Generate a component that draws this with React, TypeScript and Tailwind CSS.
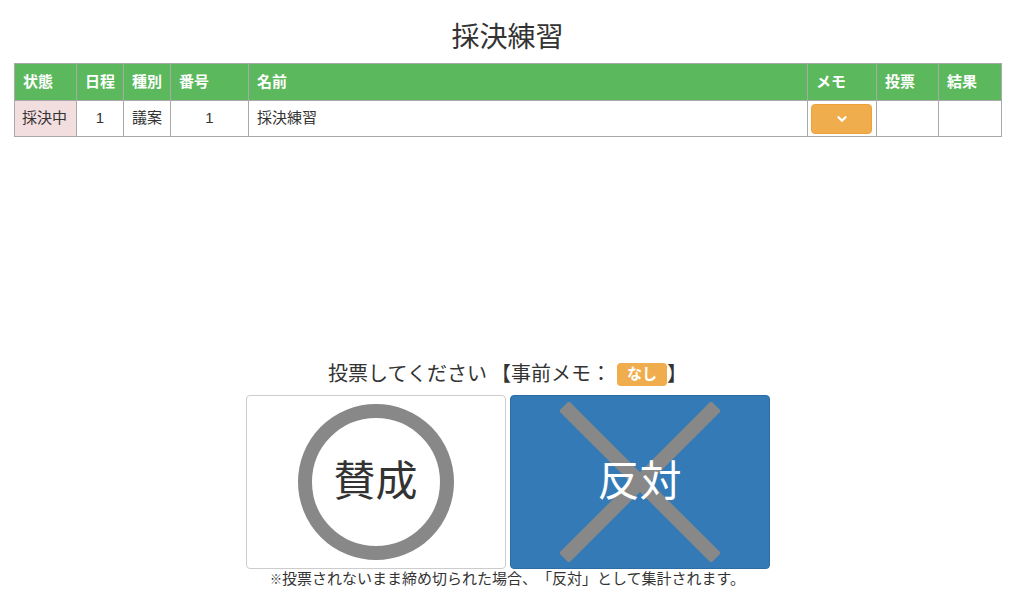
import { ChevronDown } from 'lucide-react'

const font = { fontFamily: '"Liberation Sans", "Noto Sans CJK JP", sans-serif' }

const cols = [
  { label: '状態', w: 'w-[62px]' },
  { label: '日程', w: 'w-[47px]' },
  { label: '種別', w: 'w-[47px]' },
  { label: '番号', w: 'w-[78px]' },
  { label: '名前', w: '' },
  { label: 'メモ', w: 'w-[69px]' },
  { label: '投票', w: 'w-[62px]' },
  { label: '結果', w: 'w-[63px]' },
]

function Circle() {
  return (
    <svg width="160" height="160" viewBox="0 0 160 160" className="absolute">
      <circle cx="80" cy="80" r="71" fill="none" stroke="#888888" strokeWidth="14" />
    </svg>
  )
}

function Cross() {
  return (
    <svg width="160" height="160" viewBox="0 0 160 160" className="absolute">
      <line x1="4" y1="4" x2="156" y2="156" stroke="#888888" strokeWidth="14" />
      <line x1="156" y1="4" x2="4" y2="156" stroke="#888888" strokeWidth="14" />
    </svg>
  )
}

export default function App() {
  return (
    <div className="min-h-[594px] bg-white text-[#333] [text-spacing-trim:space-all]" style={font}>
      {/* Title */}
      <h1 className="pt-[19px] text-center text-[28px] leading-[38px]">採決練習</h1>

      {/* Agenda table */}
      <div className="pl-[14px] pr-[13px] pt-[6px]">
        <table className="w-full table-fixed border-collapse border border-[#aaa] text-[15px]">
          <thead>
            <tr className="h-[37px] bg-[#5cb85c] text-white">
              {cols.map(c => (
                <th key={c.label} className={`${c.w} border border-[#aaa] px-[8px] text-left font-bold`}>
                  {c.label}
                </th>
              ))}
            </tr>
          </thead>
          <tbody>
            <tr className="h-[36px]">
              <td className="border border-[#aaa] bg-[#f2dede] px-[7px]">採決中</td>
              <td className="border border-[#aaa] text-center">1</td>
              <td className="border border-[#aaa] px-[8px]">議案</td>
              <td className="border border-[#aaa] text-center">1</td>
              <td className="border border-[#aaa] px-[8px]">採決練習</td>
              <td className="border border-[#aaa] px-[3px]">
                <button className="flex h-[30px] w-[61px] items-center justify-center rounded-[4px] border border-[#eea236] bg-[#f0ad4e] text-white">
                  <ChevronDown size={14} strokeWidth={4} />
                </button>
              </td>
              <td className="border border-[#aaa]"></td>
              <td className="border border-[#aaa]"></td>
            </tr>
          </tbody>
        </table>
      </div>

      {/* Vote area */}
      <div className="mt-[223px] flex flex-col items-center">
        <div className="flex items-center text-[20px] leading-[28px]">
          <span className="mr-[4px]">投票してください</span>
          <span>【事前メモ：</span>
          <span className="ml-[6px] flex h-[23px] w-[50px] items-center justify-center rounded-[4px] bg-[#f0ad4e] text-[15px] font-bold text-white">
            なし
          </span>
          <span>】</span>
        </div>
        <div className="mt-[7px] flex gap-[4px]">
          <button className="relative flex h-[174px] w-[260px] items-center justify-center rounded-[4px] border border-[#ccc] bg-white">
            <Circle />
            <span className="relative text-[42px] leading-none text-[#333]">賛成</span>
          </button>
          <button className="relative flex h-[174px] w-[260px] items-center justify-center rounded-[4px] border border-[#2e6da4] bg-[#337ab7]">
            <Cross />
            <span className="relative text-[42px] leading-none text-white">反対</span>
          </button>
        </div>
        <p className="text-[15px] leading-[20px]">
          <span className="text-[12px]">※</span>投票されないまま締め切られた場合、「反対」として集計されます。
        </p>
      </div>
    </div>
  )
}
